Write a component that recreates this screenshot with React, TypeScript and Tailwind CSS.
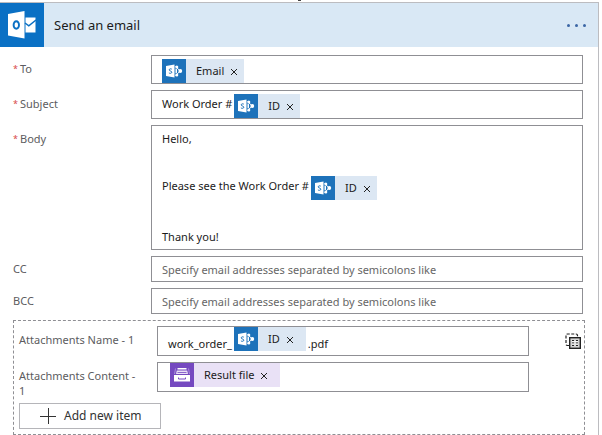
import type { ReactNode } from "react";

function OutlookLogo() {
  return (
    <svg viewBox="0 0 44 44" className="size-11 shrink-0 bg-[#0a70c4]" aria-hidden="true">
      <path d="M8 11 24.500 8v27.500L8 32.500z" fill="#fff" />
      <ellipse cx="16.300" cy="22" rx="2.700" ry="3.700" fill="none" stroke="#0a70c4" strokeWidth="1.900" />
      <path d="M25.500 14.500H35.500V29.500H25.500z" fill="#fff" />
      <path d="M25 20 28.800 22.800 36 17" fill="none" stroke="#0a70c4" strokeWidth="1.500" />
    </svg>
  );
}

function SharePointIcon() {
  return (
    <svg viewBox="0 0 24 24" className="size-6 shrink-0 bg-[#1d72ba]" aria-hidden="true">
      <path d="M4 7 12.500 5.500v13L4 17z" fill="#fff" />
      <path
        d="M9.800 10.200C9.200 9.600 7.200 9.600 7.200 10.900 7.200 12.200 9.800 11.800 9.800 13.200 9.800 14.600 7.600 14.500 6.900 13.900"
        fill="none"
        stroke="#1d72ba"
        strokeWidth="1"
      />
      <path d="M13.500 7.500 18.300 12l-4.800 4.500" fill="none" stroke="#fff" strokeWidth="1" />
      <path d="M13.500 9.500v5l1.500-.8v-3.400z" fill="#fff" />
      <circle cx="14.800" cy="8" r="1.500" fill="#fff" />
      <circle cx="18.300" cy="12" r="1.900" fill="#fff" />
      <circle cx="14.800" cy="16" r="1.500" fill="#fff" />
    </svg>
  );
}

function DrawerIcon() {
  return (
    <svg viewBox="0 0 24 24" className="size-6 shrink-0 bg-[#7549c0]" aria-hidden="true">
      <path d="M7.500 5h9v1.500h-9z" fill="#fff" />
      <path d="M6.800 7.500h10.400l.8 3.500H6z" fill="#e8def6" />
      <path d="M7.500 9.500h9" stroke="#7549c0" strokeWidth=".8" />
      <path d="M5.500 5.500 4.500 11M18.500 5.500l1 5.500" stroke="#c9b6ea" strokeWidth=".6" />
      <path d="M4 12h16v6.500H4z" fill="#fff" />
      <path d="M8.500 14.500v1.500h7v-1.500" fill="none" stroke="#7549c0" strokeWidth="1" />
    </svg>
  );
}

function ArrayIcon() {
  return (
    <svg viewBox="0 0 16 16" className="size-4" aria-hidden="true">
      <path d="M4 12.500H2.500Q1 12.500 1 11V2.500Q1 1 2.500 1H11Q12.500 1 12.500 2.500V4" fill="none" stroke="#222" strokeWidth="1.200" strokeDasharray="3 1.500" />
      <rect x="4.700" y="4.700" width="10.600" height="10.600" fill="#d4d4d4" stroke="#222" strokeWidth="1.400" />
      <path d="M7 7.500h2M11 7.500h2M7 10h2M11 10h2M7 12.500h2M11 12.500h2" stroke="#222" strokeWidth="1" />
      <path d="M7 8.500h6M7 11h6" stroke="#fff" strokeWidth=".8" />
    </svg>
  );
}

type TokenProps = { label: string; kind?: "sharepoint" | "file"; roomy?: boolean };

function Token({ label, kind = "sharepoint", roomy = false }: TokenProps) {
  const file = kind === "file";
  return (
    <span
      contentEditable={false}
      className={`flex h-6 shrink-0 items-center ${file ? "bg-[#e9e1f6]" : "bg-[#dce7f3]"}`}
    >
      {file ? <DrawerIcon /> : <SharePointIcon />}
      <span className="pl-2.5">{label}</span>
      <button
        type="button"
        aria-label={`Remove ${label}`}
        className={`flex h-6 items-center pl-1.5 ${roomy ? "pr-3" : "pr-1.5"}`}
      >
        <svg viewBox="0 0 8 8" className="mt-0.5 size-2" aria-hidden="true">
          <path d="M1 1l6 6M7 1L1 7" stroke="#222" strokeWidth="1" />
        </svg>
      </button>
    </span>
  );
}

function Editor({ labelId, className, children }: { labelId: string; className: string; children: ReactNode }) {
  return (
    <div
      role="textbox"
      tabIndex={0}
      contentEditable
      suppressContentEditableWarning
      aria-labelledby={labelId}
      className={`flex min-w-0 flex-1 border border-[#8f8f94] bg-white leading-5 text-[#1b1b1b] outline-none ${className}`}
    >
      {children}
    </div>
  );
}

function RequiredLabel({ id, text }: { id: string; text: string }) {
  return (
    <div className="flex w-[138px] shrink-0 pt-1 leading-5">
      <span className="w-[7px] text-[9px] text-[#d8484b]">*</span>
      <span id={id}>{text}</span>
    </div>
  );
}

function AddressField({ id, label }: { id: string; label: string }) {
  return (
    <div className="flex items-center">
      <label htmlFor={id} className="w-[138px] shrink-0">
        {label}
      </label>
      <input
        id={id}
        type="text"
        placeholder="Specify email addresses separated by semicolons like"
        className="h-[26px] min-w-0 flex-1 border border-[#8f8f94] bg-white px-2.5 outline-none placeholder:text-[#666]"
      />
    </div>
  );
}

export default function App() {
  return (
    <main className="bg-white pr-[3px] font-['Noto_Sans','Open_Sans',sans-serif] text-[11px] text-[#5c5c60]">
      <div className="flex h-[2px] justify-center">
        <span className="h-px w-[3px] bg-[#444]" />
      </div>
      <section className="border-t border-r border-[#bcbcc0]">
        <header className="flex items-center bg-[#d9e8f5] pr-3">
          <OutlookLogo />
          <h1 className="flex-1 pl-2.5 text-[13px] leading-5 text-[#1b1b1b]">Send an email</h1>
          <button type="button" aria-label="More options" className="flex gap-[5px] py-2">
            <span className="size-[3px] rounded-full bg-[#3b66a5]" />
            <span className="size-[3px] rounded-full bg-[#3b66a5]" />
            <span className="size-[3px] rounded-full bg-[#3b66a5]" />
          </button>
        </header>

        <form className="pt-2">
          <div className="flex flex-col gap-1.5 pr-[15px] pl-[13px]">
            <div className="flex">
              <RequiredLabel id="to-label" text="To" />
              <Editor labelId="to-label" className="px-2.5 pt-[3px]">
                <Token label="Email" />
              </Editor>
            </div>
            <div className="flex">
              <RequiredLabel id="subject-label" text="Subject" />
              <Editor labelId="subject-label" className="px-2.5 pt-[3px]">
                <span className="pr-[2px]">Work Order #</span>
                <Token label="ID" />
              </Editor>
            </div>
            <div className="flex">
              <RequiredLabel id="body-label" text="Body" />
              <Editor labelId="body-label" className="flex-col gap-[27px] px-2.5 pt-[3px] pb-[2px]">
                <p>Hello,</p>
                <p className="flex">
                  <span className="pr-[2px]">Please see the Work Order #</span>
                  <Token label="ID" />
                </p>
                <p>Thank you!</p>
              </Editor>
            </div>
            <AddressField id="cc" label="CC" />
            <AddressField id="bcc" label="BCC" />
          </div>

          <fieldset className="mx-[13px] mt-1.5 border border-dashed border-[#8f8f94] py-[5px] pr-[3px] pl-[5px]">
            <div className="flex items-start">
              <div className="flex flex-1 flex-col gap-1.5">
                <div className="flex">
                  <div id="name-label" className="w-[138px] shrink-0 pt-1 leading-5">
                    Attachments Name - 1
                  </div>
                  <Editor labelId="name-label" className="h-[30px] gap-[2px] px-2.5">
                    <span className="pt-[7px]">work_order_</span>
                    <Token label="ID" roomy />
                    <span className="pt-[7px]">.pdf</span>
                  </Editor>
                </div>
                <div className="flex">
                  <div id="content-label" className="w-[138px] shrink-0 pt-1.5 pr-4 leading-[15px]">
                    Attachments Content - 1
                  </div>
                  <Editor labelId="content-label" className="h-[30px] px-3">
                    <Token label="Result file" kind="file" roomy />
                  </Editor>
                </div>
              </div>
              <button type="button" aria-label="Switch to input entire array" className="ml-9 flex h-[30px] items-center">
                <ArrayIcon />
              </button>
            </div>
            <button
              type="button"
              className="mt-[5px] flex h-[26px] w-[142px] items-center gap-2 border border-[#b5b5b9] bg-white pl-5 text-[12px] text-[#333]"
            >
              <svg viewBox="0 0 16 16" className="size-4" aria-hidden="true">
                <path d="M8.500 0v16M0 8.500h16" stroke="#333" strokeWidth="1" />
              </svg>
              Add new item
            </button>
          </fieldset>
        </form>
      </section>
    </main>
  );
}
